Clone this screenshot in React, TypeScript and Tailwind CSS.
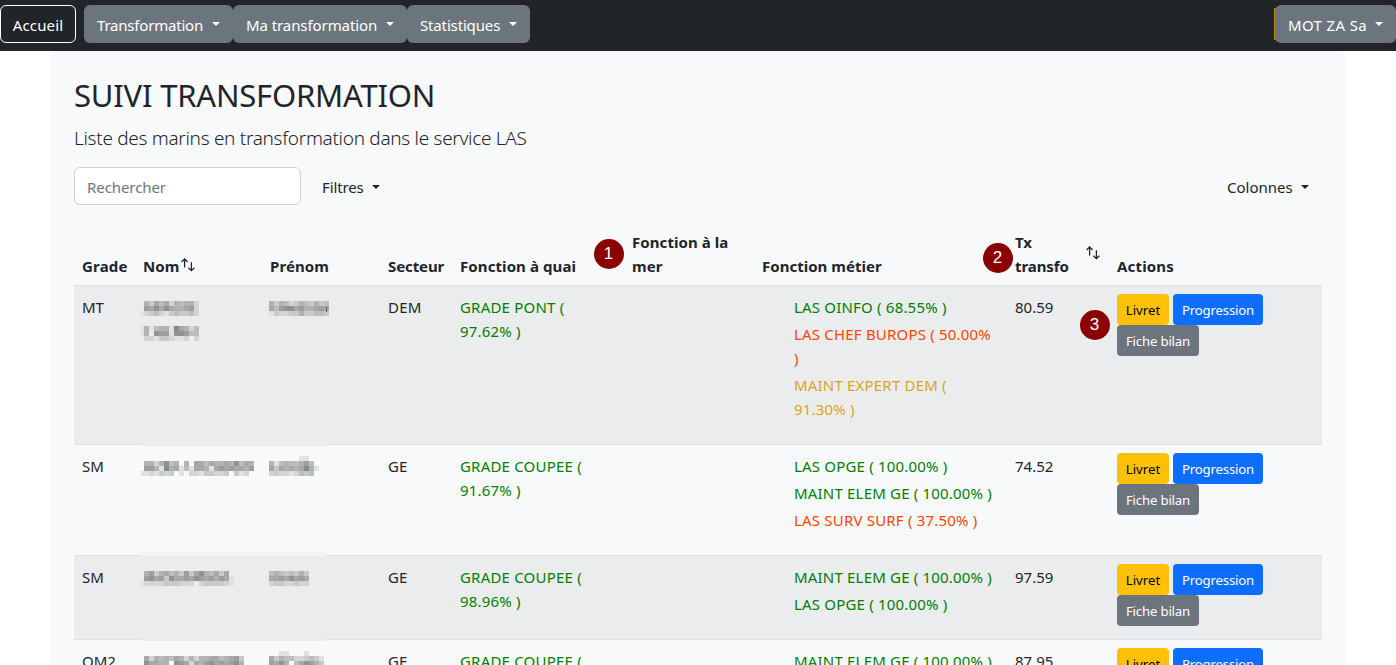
import type { ReactNode } from "react";

const GRID = "grid grid-cols-[61px_127px_118px_72px_172px_130px_253px_102px_213px]";

const SHADES = ["", "#e0e1e3", "#d3d4d6", "#c8c9cb", "#bcbdbf", "#b1b2b4", "#a7a8aa", "#9d9ea0", "#919294", "#858a8d"];

type Skill = { label: string; tone: "green" | "orange" | "gold" };

type Row = {
  grade: string;
  name: string[];
  nameClass: string;
  first: string[];
  firstClass: string;
  sector: string;
  quay: string;
  skills: Skill[];
  rate: string;
  edge: ReactNode;
};

const ROWS: Row[] = [
  {
    grade: "MT",
    name: [
      "053646254552",
      "076868655672",
      "123421343342",
      "000000000000",
      "000000000000",
      "151455196524",
      "150877188744",
      "022133211202",
    ],
    nameClass: "mt-[7px] -ml-[2px]",
    first: ["535423543534", "647886755676", "132233533443"],
    firstClass: "mt-[7px] -ml-px",
    sector: "DEM",
    quay: "GRADE PONT ( 97.62% )",
    skills: [
      { label: "LAS OINFO ( 68.55% )", tone: "green" },
      { label: "LAS CHEF BUROPS ( 50.00% )", tone: "orange" },
      { label: "MAINT EXPERT DEM ( 91.30% )", tone: "gold" },
    ],
    rate: "80.59",
    edge: <div className="absolute -bottom-[2px] left-[67px] z-10 h-[3px] w-[185px] bg-[#ebecee]" />,
  },
  {
    grade: "SM",
    name: ["05525845050664655658465", "07751956141665167676657", "11213230102213322303120"],
    nameClass: "mt-[8px] -ml-[2px]",
    first: ["0000001100", "5145445740", "6365656951", "2322124340"],
    firstClass: "mt-[3px] -ml-px",
    sector: "GE",
    quay: "GRADE COUPEE ( 91.67% )",
    skills: [
      { label: "LAS OPGE ( 100.00% )", tone: "green" },
      { label: "MAINT ELEM GE ( 100.00% )", tone: "green" },
      { label: "LAS SURV SURF ( 37.50% )", tone: "orange" },
    ],
    rate: "74.52",
    edge: <div className="absolute -bottom-px left-[67px] z-10 h-[5px] w-[185px] bg-[#f3f4f6]" />,
  },
  {
    grade: "SM",
    name: ["05735645373685463600", "07867386676876757610", "12222333222023333210"],
    nameClass: "mt-[7px] -ml-[2px]",
    first: ["45434353", "66768676", "23322322"],
    firstClass: "mt-[7px] -ml-px",
    sector: "GE",
    quay: "GRADE COUPEE ( 98.96% )",
    skills: [
      { label: "MAINT ELEM GE ( 100.00% )", tone: "green" },
      { label: "LAS OPGE ( 100.00% )", tone: "green" },
    ],
    rate: "97.59",
    edge: <div className="absolute -bottom-[2px] left-[67px] z-10 h-[3px] w-[185px] bg-[#ebecee]" />,
  },
  {
    grade: "QM2",
    name: ["062545465252556645673", "086655087626578676785", "012321221232232221220"],
    nameClass: "mt-[8px] -ml-[2px]",
    first: ["00110001000", "63544223431", "76850468753", "22312322221"],
    firstClass: "mt-[3px] -ml-px",
    sector: "GE",
    quay: "GRADE COUPEE (",
    skills: [{ label: "MAINT ELEM GE ( 100.00% )", tone: "green" }],
    rate: "87.95",
    edge: null,
  },
];

function Mosaic({ rows, offset = 0, className }: { rows: string[]; offset?: number; className: string }) {
  const width = rows[0].length * 5 - offset;
  return (
    <svg width={width} height={rows.length * 5} className={`block max-w-none ${className}`} shapeRendering="crispEdges" aria-hidden>
      {rows.map((r, y) =>
        r.split("").map((c, x) =>
          c === "0" ? null : <rect key={`${x}-${y}`} x={x * 5 - offset} y={y * 5} width={5} height={5} fill={SHADES[Number(c)]} />,
        ),
      )}
    </svg>
  );
}

function Caret({ className = "" }: { className?: string }) {
  return <span className={`inline-block h-0 w-0 border-x-4 border-t-4 border-x-transparent border-t-current ${className}`} />;
}

function SortIcon({ className }: { className: string }) {
  return (
    <svg width="14" height="14" viewBox="0 0 14 14" fill="none" stroke="#212529" strokeWidth="1.25" className={className}>
      <path d="M3.6 9.4V1.2M0.6 4L3.6 1L6.6 4" />
      <path d="M10.4 4.3V12.5M7.4 9.7L10.4 12.7L13.4 9.7" />
    </svg>
  );
}

function NavButton({ label, className }: { label: string; className: string }) {
  return (
    <button className={`flex h-[38px] items-center justify-between rounded-md bg-[#6c757d] px-[13px] whitespace-nowrap text-white ${className}`}>
      <span className="pt-px">{label}</span>
      <Caret />
    </button>
  );
}

function Marker({ n, className }: { n: number; className: string }) {
  return (
    <span
      className={`absolute z-20 flex h-[30px] w-[30px] items-center justify-center rounded-full bg-[#8b0000] pr-px pb-px font-['Liberation_Sans',sans-serif] text-[17px] leading-none text-white ${className}`}
    >
      {n}
    </span>
  );
}

const TONES = {
  green: "text-[#008000]",
  orange: "text-[#ff4500]",
  gold: "text-[#daa520]",
};

export default function App() {
  return (
    <div className="h-[665px] overflow-hidden bg-white font-['Noto_Sans',sans-serif] text-[15px] leading-6 text-[#212529]">
      <nav className="flex h-[51px] bg-[#212529] pt-[5px]">
        <button className="mr-2 h-[38px] w-[76px] rounded-md border border-white pt-[2px] tracking-[0.15px] text-white">Accueil</button>
        <NavButton label="Transformation" className="w-[149px] tracking-[-0.2px]" />
        <NavButton label="Ma transformation" className="w-[174px] tracking-[-0.08px]" />
        <NavButton label="Statistiques" className="w-[123px] tracking-[-0.15px]" />
        <div className="relative ml-auto">
          <span className="absolute top-[3px] -left-px h-8 w-1 bg-[#b8860b]" />
          <NavButton label="MOT ZA Sa" className="relative w-[121px] tracking-[0.35px]" />
        </div>
      </nav>

      <main className="relative mx-[50px] h-[700px] rounded-t-md bg-[#f8f9fb] p-6">
        <h1 className="mb-2 h-[38px] pt-px text-[31px] leading-[38px] tracking-[-0.2px] whitespace-nowrap">SUIVI TRANSFORMATION</h1>
        <p className="mb-4 h-[30px] pt-[2px] text-[19px] leading-[30px] font-light tracking-[-0.3px] whitespace-nowrap">
          Liste des marins en transformation dans le service LAS
        </p>
        <div className="mb-4 flex h-[38px] items-center">
          <input
            placeholder="Rechercher"
            className="h-[38px] w-[227px] rounded-md border border-[#ced4da] bg-white px-3 pt-px tracking-[-0.08px] placeholder:text-[#6c757d] placeholder:opacity-100"
          />
          <button className="ml-[21px] flex w-[58px] items-center justify-between tracking-[-0.12px]">
            <span className="pt-px">Filtres</span>
            <Caret className="mt-[2px]" />
          </button>
          <button className="mr-[13px] ml-auto flex w-[82px] items-center justify-between">
            <span className="pt-px">Colonnes</span>
            <Caret className="mt-[2px]" />
          </button>
        </div>

        <div className={`${GRID} h-[65px] items-end border-b border-[#dee2e6] pb-[7px] font-bold [&>div]:pl-2`}>
          <div className="tracking-[0.2px]">Grade</div>
          <div className="flex items-center tracking-[0.1px]">
            Nom
            <SortIcon className="mb-[3px] ml-px" />
          </div>
          <div className="tracking-[0.1px]">Prénom</div>
          <div className="tracking-[-0.1px]">Secteur</div>
          <div className="tracking-[0.09px]">Fonction à quai</div>
          <div className="tracking-[0.07px]">
            Fonction à la
            <br />
            mer
          </div>
          <div className="tracking-[0.02px]">Fonction métier</div>
          <div className="flex items-center justify-between pr-[9px]">
            <span className="tracking-[-0.08px]">
              Tx
              <br />
              transfo
            </span>
            <SortIcon className="mb-[2px]" />
          </div>
          <div className="tracking-[0.17px]">Actions</div>
        </div>

        {ROWS.map((row, i) => (
          <div key={i} className={`relative ${GRID} border-b border-[#dee2e6] py-2 [&>div]:pl-2 ${i % 2 === 0 ? "bg-[#ebecee]" : ""}`}>
            <div className="pt-px">{row.grade}</div>
            <div>
              <Mosaic rows={row.name} offset={2} className={row.nameClass} />
            </div>
            <div className="flex items-start">
              <Mosaic rows={row.first} className={row.firstClass} />
              {i === 0 && <span className="mt-[13px] -ml-[3px] h-[5px] w-px bg-[#55585b]" />}
            </div>
            <div className="pt-px tracking-[0.2px]">{row.sector}</div>
            <div className="w-[140px] pt-px tracking-[0.2px] text-[#008000]">{row.quay}</div>
            <div />
            <div>
              <ul className="mb-4 flex flex-col gap-[3px] pl-8">
                {row.skills.map((s) => (
                  <li key={s.label} className={`w-[205px] translate-y-px tracking-[0.19px] ${TONES[s.tone]}`}>
                    {s.label}
                  </li>
                ))}
              </ul>
            </div>
            <div className="pt-px">{row.rate}</div>
            <div className="flex flex-wrap content-start gap-x-1 pr-8 text-[13.2px] leading-[31px]">
              <button className="h-[31px] w-[52px] rounded bg-[#ffc107] pt-px text-black">Livret</button>
              <button className="h-[31px] w-[90px] rounded bg-[#0d6efd] pt-px tracking-[-0.18px] text-white">Progression</button>
              <button className="h-[31px] w-[82px] rounded bg-[#6c757d] pt-px tracking-[-0.18px] text-white">Fiche bilan</button>
            </div>
            {row.edge}
          </div>
        ))}

        <Marker n={1} className="top-[188px] left-[544px]" />
        <Marker n={2} className="top-[192px] left-[933px]" />
        <Marker n={3} className="top-[259px] left-[1030px]" />
      </main>
    </div>
  );
}
